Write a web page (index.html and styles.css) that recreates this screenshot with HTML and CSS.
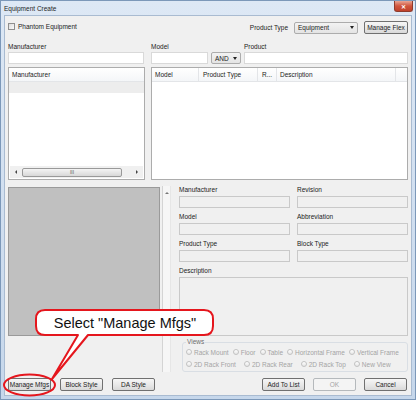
FILE: index.html
```html
<!DOCTYPE html>
<html lang="en">
<head>
    <meta charset="UTF-8">
    <title>Equipment Create</title>
    <link rel="stylesheet" href="styles.css">
</head>
<body>
<div class="screen">
    <div class="window">
        <div class="titlebar">
            <span class="title">Equipment Create</span>
            <span class="close">&#x2715;</span>
        </div>
        <div class="client">
            <div class="top-row">
                <div class="check"><span class="check-box"></span>Phantom Equipment</div>
                <div class="top-right">
                    <span>Product Type</span>
                    <div class="select select-type">Equipment<span class="arrow"></span></div>
                    <button class="btn btn-flex">Manage Flex</button>
                </div>
            </div>

            <div class="filter-grid">
                <div class="lbl">Manufacturer</div>
                <div class="lbl">Model</div>
                <div></div>
                <div class="lbl">Product</div>
                <div class="text-input"></div>
                <div class="text-input"></div>
                <div class="select select-and">AND<span class="arrow"></span></div>
                <div class="text-input"></div>
            </div>

            <div class="lists">
                <div class="list list-mfg">
                    <div class="list-header"><div class="col">Manufacturer</div></div>
                    <div class="list-row"></div>
                    <div class="list-body"></div>
                    <div class="hscroll">
                        <span class="arrow-left"></span>
                        <div class="thumb">III</div>
                        <span class="arrow-right"></span>
                    </div>
                </div>
                <div class="list list-models">
                    <div class="list-header">
                        <div class="col col-model">Model</div>
                        <div class="col col-type">Product Type</div>
                        <div class="col col-r">R...</div>
                        <div class="col col-desc">Description</div>
                        <div class="col col-rest"></div>
                    </div>
                </div>
            </div>

            <div class="lower">
                <div class="preview"></div>
                <div class="vscroll"><span class="arrow-up"></span></div>
                <div class="details">
                    <div class="field-grid">
                        <div class="field">
                            <div class="lbl">Manufacturer</div>
                            <div class="text-input disabled"></div>
                        </div>
                        <div class="field">
                            <div class="lbl">Revision</div>
                            <div class="text-input disabled"></div>
                        </div>
                        <div class="field">
                            <div class="lbl">Model</div>
                            <div class="text-input disabled"></div>
                        </div>
                        <div class="field">
                            <div class="lbl">Abbreviation</div>
                            <div class="text-input disabled"></div>
                        </div>
                        <div class="field">
                            <div class="lbl">Product Type</div>
                            <div class="text-input disabled"></div>
                        </div>
                        <div class="field">
                            <div class="lbl">Block Type</div>
                            <div class="text-input disabled"></div>
                        </div>
                    </div>
                    <div class="lbl desc-lbl">Description</div>
                    <div class="text-input disabled desc-box"></div>
                    <fieldset class="views">
                        <legend>Views</legend>
                        <div class="radio-row">
                            <span class="radio-item"><span class="radio"></span>Rack Mount</span>
                            <span class="radio-item"><span class="radio"></span>Floor</span>
                            <span class="radio-item"><span class="radio"></span>Table</span>
                            <span class="radio-item"><span class="radio"></span>Horizontal Frame</span>
                            <span class="radio-item"><span class="radio"></span>Vertical Frame</span>
                        </div>
                        <div class="radio-row wide">
                            <span class="radio-item"><span class="radio"></span>2D Rack Front</span>
                            <span class="radio-item"><span class="radio"></span>2D Rack Rear</span>
                            <span class="radio-item"><span class="radio"></span>2D Rack Top</span>
                            <span class="radio-item"><span class="radio"></span>New View</span>
                        </div>
                    </fieldset>
                </div>
            </div>

            <div class="button-row">
                <div class="button-group">
                    <button class="btn">Manage Mfgs</button>
                    <button class="btn">Block Style</button>
                    <button class="btn">DA Style</button>
                </div>
                <div class="button-group right">
                    <button class="btn">Add To List</button>
                    <button class="btn btn-disabled">OK</button>
                    <button class="btn">Cancel</button>
                </div>
            </div>
        </div>
    </div>

    <!-- tutorial callout over the dialog -->
    <svg class="callout-shape" width="416" height="400" viewBox="0 0 416 400">
        <path d="M45 310 H204 Q213 310 213 319 V326 Q213 335 204 335 H88 L52 379 L78 335 H45 Q36 335 36 326 V319 Q36 310 45 310 Z"
              fill="#fff" stroke="#e5161d" stroke-width="2" stroke-linejoin="round"/>
        <ellipse cx="29.5" cy="385" rx="25.5" ry="10.5" fill="none" stroke="#e5161d" stroke-width="2"/>
    </svg>
    <div class="callout-text">Select "Manage Mfgs"</div>
</div>
</body>
</html>
```

FILE: styles.css
```css
* {
    box-sizing: border-box;
}
body {
    margin: 0;
    font-family: "Liberation Sans", Arial, sans-serif;
    font-size: 6.5px;
    color: #1b1b1b;
}
.screen {
    position: relative;
    width: 416px;
    height: 400px;
}
.window {
    width: 416px;
    height: 400px;
    background: linear-gradient(#dde8f5, #c6d7eb);
    border: 1px solid #7c98b9;
    display: flex;
    flex-direction: column;
}
.titlebar {
    height: 14px;
    display: flex;
    justify-content: space-between;
    align-items: center;
    padding: 0 2px 0 3px;
}
.title {
    color: #1e1e1e;
}
.close {
    align-self: flex-start;
    width: 19px;
    height: 11px;
    background: linear-gradient(#e9a594, #d0553d 50%, #c0412b);
    border: 1px solid #8e3b2d;
    border-top: none;
    border-radius: 0 0 3px 3px;
    color: #fff;
    font-size: 6px;
    font-weight: bold;
    display: flex;
    align-items: center;
    justify-content: center;
}
.client {
    flex: 1;
    margin: 0 3px 3px 3px;
    background: #f0f0f0;
    border: 1px solid #a9bbd1;
    padding: 0 3px;
    display: flex;
    flex-direction: column;
}
.top-row {
    margin-top: 5px;
    height: 13px;
    display: flex;
    justify-content: space-between;
}
.check {
    display: flex;
    align-items: center;
    margin-top: 1px;
    height: 8px;
}
.check-box {
    width: 7px;
    height: 7px;
    border: 1px solid #8f8f8f;
    background: linear-gradient(135deg, #dcdcdc, #fbfbfb);
    margin-right: 3px;
}
.top-right {
    display: flex;
    align-items: center;
}
.select {
    height: 12px;
    border: 1px solid #acacac;
    border-radius: 2px;
    background: linear-gradient(#f3f3f3, #e4e4e4);
    display: flex;
    align-items: center;
    justify-content: space-between;
    padding: 0 3px;
}
.select-type {
    width: 64px;
    margin-left: 6px;
}
.select-and {
    width: 30px;
}
.arrow {
    width: 0;
    height: 0;
    border-left: 2.5px solid transparent;
    border-right: 2.5px solid transparent;
    border-top: 3px solid #222;
}
.btn {
    height: 13px;
    width: 43px;
    padding: 0;
    border: 1px solid #707070;
    border-radius: 2px;
    background: linear-gradient(#f6f6f6, #e9e9e9 50%, #d9d9d9);
    font-family: "Liberation Sans", Arial, sans-serif;
    font-size: 6.5px;
    color: #1b1b1b;
    white-space: nowrap;
}
.btn-flex {
    width: 44px;
    margin-left: 6px;
}
.btn-disabled {
    border-color: #b5b9bc;
    background: #f4f4f4;
    color: #a5a5a5;
}
.filter-grid {
    margin-top: 8px;
    display: grid;
    grid-template-columns: 140px 57px 30px 1fr;
    grid-template-rows: 9px 12px;
    column-gap: 3px;
    row-gap: 1px;
}
.filter-grid > :nth-child(4n+1) {
    margin-right: 4px;
}
.lbl {
    line-height: 9px;
    height: 9px;
}
.text-input {
    height: 12px;
    background: #fff;
    border: 1px solid #d9d9d9;
}
.text-input.disabled {
    background: #f0f0f0;
    border-color: #c9c9c9;
}
.lists {
    margin-top: 3px;
    height: 113px;
    display: flex;
    gap: 6px;
}
.list {
    background: #fff;
    border: 1px solid #acacac;
    display: flex;
    flex-direction: column;
}
.list-mfg {
    width: 137px;
}
.list-models {
    flex: 1;
}
.list-header {
    height: 14px;
    display: flex;
    background: linear-gradient(#fff, #f4f6f8);
    border-bottom: 1px solid #e3e5e8;
}
.col {
    line-height: 13px;
    padding-left: 3px;
    border-right: 1px solid #e3e5e8;
}
.list-mfg .col {
    border-right: none;
}
.col-model { width: 47px; }
.col-type { width: 59px; padding-left: 4px; }
.col-r { width: 19px; padding-left: 4px; }
.col-desc { width: 119px; }
.col-rest { flex: 1; border-right: none; }
.list-row {
    height: 11px;
    background: #ededed;
}
.list-body {
    flex: 1;
}
.hscroll {
    height: 12px;
    margin: 0 1px 1px;
    display: flex;
    align-items: center;
    background: #f0f0f0;
    padding: 0 5px;
}
.arrow-left, .arrow-right {
    width: 0;
    height: 0;
    border-top: 2px solid transparent;
    border-bottom: 2px solid transparent;
}
.arrow-left {
    border-right: 2px solid #444;
}
.arrow-right {
    border-left: 2px solid #444;
    margin-left: auto;
}
.thumb {
    width: 100px;
    height: 9px;
    margin-left: 5px;
    border: 1px solid #999;
    border-radius: 2px;
    background: linear-gradient(#f4f4f4, #d8d8d8);
    text-align: center;
    font-size: 5px;
    line-height: 7px;
    color: #555;
}
.lower {
    margin-top: 6px;
    height: 186px;
    display: flex;
}
.preview {
    width: 153px;
    height: 149px;
    margin-top: 1px;
    background: #c0c0c0;
    border: 1px solid #9a9a9a;
}
.vscroll {
    width: 9px;
    margin-left: 2px;
    background: #f6f6f6;
    border-left: 1px solid #d4d4d4;
    border-right: 1px solid #e6e6e6;
    display: flex;
    justify-content: center;
}
.arrow-up {
    width: 0;
    height: 0;
    margin-top: 6px;
    border-left: 2px solid transparent;
    border-right: 2px solid transparent;
    border-bottom: 2px solid #777;
}
.details {
    flex: 1;
    margin-left: 8px;
    display: flex;
    flex-direction: column;
}
.field-grid {
    display: grid;
    grid-template-columns: 111px 111px;
    column-gap: 7px;
    row-gap: 5px;
}
.field .lbl {
    height: 8px;
    line-height: 8px;
    margin-bottom: 2px;
}
.desc-lbl {
    margin-top: 5px;
    height: 8px;
    line-height: 8px;
    margin-bottom: 2px;
}
.desc-box {
    height: 59px;
}
.views {
    margin: 2px 0 0 3px;
    padding: 0 2px 1px 3px;
    border: 1px solid #d9dee4;
    border-radius: 3px;
    min-width: 0;
}
.views legend {
    padding: 0 1px;
    line-height: 8px;
    color: #6d6d6d;
}
.radio-row {
    height: 12px;
    display: flex;
    align-items: center;
    gap: 4px;
    color: #a4a4a4;
    white-space: nowrap;
}
.radio-row.wide {
    gap: 8px;
}
.radio-item {
    display: flex;
    align-items: center;
    flex-shrink: 0;
}
.radio {
    width: 6px;
    height: 6px;
    border-radius: 50%;
    border: 1px solid #c2c2c2;
    background: linear-gradient(#fff, #e6e6e6);
    margin-right: 2px;
}
.button-row {
    margin-top: 6px;
    display: flex;
    justify-content: space-between;
}
.button-group {
    display: flex;
    gap: 9px;
}
.button-group.right {
    gap: 8px;
    margin-right: 1px;
}
.callout-shape {
    position: absolute;
    left: 0;
    top: 0;
    pointer-events: none;
}
.callout-text {
    position: absolute;
    left: 36px;
    top: 310px;
    width: 178px;
    height: 25px;
    display: flex;
    align-items: center;
    justify-content: center;
    font-size: 14.5px;
    color: #111;
}
```
